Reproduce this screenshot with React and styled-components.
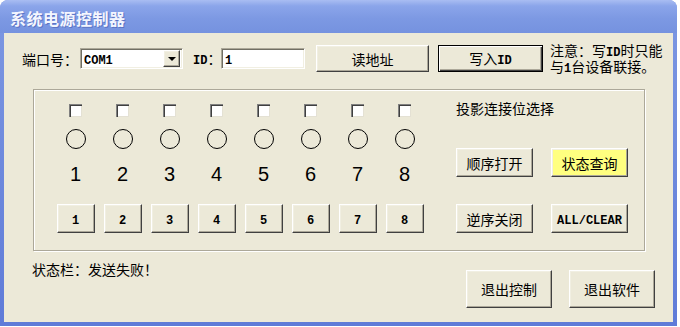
import styled, { createGlobalStyle, css } from "styled-components";

const GlobalStyle = createGlobalStyle`
  body {
    margin: 0;
    background: #ffffff;
    font-family: "Noto Sans CJK SC", "Liberation Sans", sans-serif;
  }
`;

const Window = styled.div`
  width: 677px;
  height: 326px;
  display: flex;
  flex-direction: column;
  background: linear-gradient(#7d98e2, #5f7bd8);
  border-radius: 8px 8px 0 0;
  overflow: hidden;
`;

const TitleBar = styled.div`
  height: 33px;
  flex: none;
  display: flex;
  align-items: center;
  padding: 3px 0 0 10px;
  box-sizing: border-box;
  background: linear-gradient(#a9bdf2 0%, #8ba5ea 18%, #7d99e3 55%, #7592df 100%);
  color: #f4f6ff;
  font-size: 16px;
  font-weight: bold;
  letter-spacing: 0.5px;
  text-shadow: 1px 1px 0 #5c74c4;
`;

const Client = styled.div`
  flex: 1;
  margin: 0 4px 4px;
  background: #ece9d8;
  padding: 12px 0 0 18px;
  display: flex;
  flex-direction: column;
  font-size: 14px;
  color: #000;
`;

const TopRow = styled.div`
  display: flex;
  align-items: center;
  height: 27px;
`;

const FieldLabel = styled.span`
  width: ${(p) => p.$w}px;
  margin-left: ${(p) => p.$ml || 0}px;
  flex: none;
  font-size: 14px;
  line-height: 16px;
  white-space: nowrap;
`;

const Latin = styled.span`
  font-family: "Liberation Mono", monospace;
  font-size: ${(p) => p.$size || 12}px;
  font-weight: bold;
  line-height: 1;
`;

const sunken = css`
  box-sizing: border-box;
  border-top: 1px solid #aca899;
  border-left: 1px solid #aca899;
  border-right: 1px solid #ffffff;
  border-bottom: 1px solid #ffffff;
  box-shadow: inset 1px 1px 0 #716f64, inset -1px -1px 0 #f1efe2;
  background: #ffffff;
`;

const Combo = styled.div`
  ${sunken};
  width: 103px;
  height: 21px;
  display: flex;
  align-items: center;
  flex: none;
`;

const FieldText = styled.span`
  flex: 1;
  padding-left: 3px;
  line-height: 17px;
`;

const raised = css`
  background: #ece9d8;
  border-top: 1px solid #ffffff;
  border-left: 1px solid #ffffff;
  border-right: 1px solid #404040;
  border-bottom: 1px solid #404040;
  box-shadow: inset -1px -1px 0 #aca899, inset 1px 1px 0 #f1efe2;
`;

const ComboArrow = styled.span`
  ${raised};
  box-sizing: border-box;
  width: 17px;
  height: 17px;
  margin-right: 2px;
  display: flex;
  align-items: center;
  justify-content: center;
  flex: none;

  &::after {
    content: "";
    border-left: 4px solid transparent;
    border-right: 4px solid transparent;
    border-top: 4px solid #000;
    margin-top: 1px;
  }
`;

const TextInput = styled.div`
  ${sunken};
  width: 84px;
  height: 21px;
  display: flex;
  align-items: center;
  flex: none;
`;

const Button = styled.button`
  ${raised};
  box-sizing: border-box;
  width: ${(p) => p.$w}px;
  height: ${(p) => p.$h}px;
  margin-left: ${(p) => p.$ml || 0}px;
  flex: none;
  padding: 0;
  font-family: "Noto Sans CJK SC", sans-serif;
  font-size: ${(p) => p.$fs || 14}px;
  line-height: 16px;
  color: #000;
  text-align: center;
  white-space: nowrap;
  background: ${(p) => p.$face || "#ece9d8"};

  ${(p) =>
    p.$default &&
    css`
      border: 1px solid #000;
      box-shadow: inset 1px 1px 0 #ffffff, inset -1px -1px 0 #404040,
        inset -2px -2px 0 #aca899;
    `}
`;

const Note = styled.div`
  margin-left: 7px;
  font-size: 14px;
  line-height: 15px;
  white-space: nowrap;
`;

const GroupBox = styled.div`
  margin: 17px 0 0 11px;
  width: 612px;
  height: 162px;
  box-sizing: border-box;
  border: 1px solid #aca899;
  box-shadow: inset 1px 1px 0 #ffffff, 1px 1px 0 #ffffff;
  display: flex;
  padding: 10px 0 0 18px;
`;

const ChannelGrid = styled.div`
  display: grid;
  grid-template-columns: repeat(8, 47px);
`;

const Channel = styled.div`
  display: flex;
  flex-direction: column;
  align-items: center;
  padding-top: 4px;
`;

const CheckBox = styled.span`
  width: 13px;
  height: 13px;
  box-sizing: border-box;
  background: #ffffff;
  border-top: 1px solid #808080;
  border-left: 1px solid #808080;
  box-shadow: inset 1px 1px 0 #404040, inset -1px -1px 0 #e4e1d4;
`;

const Lamp = styled.span`
  margin-top: 12px;
  width: 20px;
  height: 20px;
  box-sizing: border-box;
  border: 1px solid #000;
  border-radius: 50%;
`;

const Number = styled.span`
  margin-top: 14px;
  font-family: "Liberation Sans", Arial, sans-serif;
  font-size: 20px;
  line-height: 22px;
`;

const ChannelButton = styled(Button)`
  margin-top: 19px;
`;

const SidePanel = styled.div`
  margin-left: 28px;
  display: flex;
  flex-direction: column;
`;

const Caption = styled.div`
  font-size: 14px;
  line-height: 16px;
`;

const ActionRow = styled.div`
  display: flex;
  gap: 18px;
  margin-top: ${(p) => p.$mt}px;
`;

const BottomRow = styled.div`
  display: flex;
  margin-top: 10px;
  padding-right: 18px;
`;

const Status = styled.div`
  margin-left: 10px;
  font-size: 14px;
  line-height: 16px;
`;

const ExitButtons = styled.div`
  margin-left: auto;
  margin-top: 9px;
  display: flex;
  gap: 17px;
`;

const channels = [1, 2, 3, 4, 5, 6, 7, 8];

export default function App() {
  return (
    <>
      <GlobalStyle />
      <Window>
        <TitleBar>系统电源控制器</TitleBar>
        <Client>
          <TopRow>
            <FieldLabel $w={58}>端口号：</FieldLabel>
            <Combo>
              <FieldText>
                <Latin>COM1</Latin>
              </FieldText>
              <ComboArrow />
            </Combo>
            <FieldLabel $w={28} $ml={10}>
              <Latin>ID</Latin>：
            </FieldLabel>
            <TextInput>
              <FieldText>
                <Latin>1</Latin>
              </FieldText>
            </TextInput>
            <Button $w={113} $h={27} $ml={11}>
              读地址
            </Button>
            <Button $w={105} $h={27} $ml={9} $default>
              写入<Latin>ID</Latin>
            </Button>
            <Note>
              注意：写<Latin>ID</Latin>时只能
              <br />与<Latin>1</Latin>台设备联接。
            </Note>
          </TopRow>

          <GroupBox>
            <ChannelGrid>
              {channels.map((n) => (
                <Channel key={n}>
                  <CheckBox />
                  <Lamp />
                  <Number>{n}</Number>
                  <ChannelButton $w={38} $h={29}>
                    <Latin>{n}</Latin>
                  </ChannelButton>
                </Channel>
              ))}
            </ChannelGrid>
            <SidePanel>
              <Caption>投影连接位选择</Caption>
              <ActionRow $mt={32}>
                <Button $w={77} $h={29}>
                  顺序打开
                </Button>
                <Button $w={77} $h={29} $face="#ffff80">
                  状态查询
                </Button>
              </ActionRow>
              <ActionRow $mt={27}>
                <Button $w={77} $h={29}>
                  逆序关闭
                </Button>
                <Button $w={77} $h={29}>
                  <Latin>ALL/CLEAR</Latin>
                </Button>
              </ActionRow>
            </SidePanel>
          </GroupBox>

          <BottomRow>
            <Status>状态栏：发送失败！</Status>
            <ExitButtons>
              <Button $w={86} $h={38}>
                退出控制
              </Button>
              <Button $w={86} $h={38}>
                退出软件
              </Button>
            </ExitButtons>
          </BottomRow>
        </Client>
      </Window>
    </>
  );
}
